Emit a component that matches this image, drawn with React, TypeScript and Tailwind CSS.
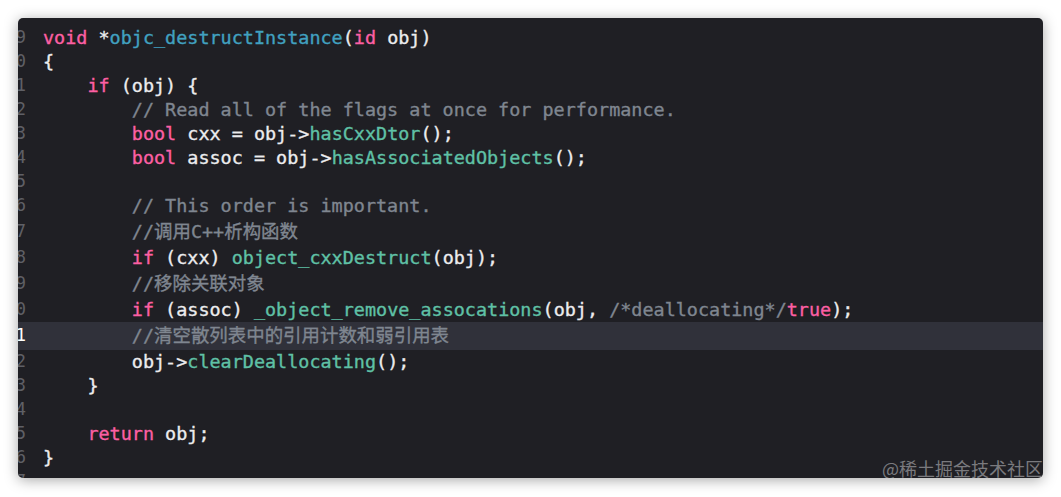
import React from 'react';

type Kind = 'k' | 'p' | 'c' | 'f' | 'm';
type Token = [Kind, string];

interface CodeLine {
  no: number;
  tokens: Token[];
  tall?: boolean;
  active?: boolean;
}

const kindClass: Record<Kind, string> = {
  k: 'text-[#fc5fa3]',
  p: 'text-[#ececee]',
  c: 'text-[#7f8690]',
  f: 'text-[#41a1c0]',
  m: 'text-[#5fc1a6]',
};

const I1 = '    ';
const I2 = '        ';

const lines: CodeLine[] = [
  { no: 9, tokens: [['k', 'void'], ['p', ' *'], ['f', 'objc_destructInstance'], ['p', '('], ['k', 'id'], ['p', ' obj)']] },
  { no: 10, tokens: [['p', '{']] },
  { no: 11, tokens: [['p', I1], ['k', 'if'], ['p', ' (obj) {']] },
  { no: 12, tokens: [['p', I2], ['c', '// Read all of the flags at once for performance.']] },
  { no: 13, tokens: [['p', I2], ['k', 'bool'], ['p', ' cxx = obj->'], ['m', 'hasCxxDtor'], ['p', '();']] },
  { no: 14, tokens: [['p', I2], ['k', 'bool'], ['p', ' assoc = obj->'], ['m', 'hasAssociatedObjects'], ['p', '();']] },
  { no: 15, tokens: [] },
  { no: 16, tokens: [['p', I2], ['c', '// This order is important.']] },
  { no: 17, tall: true, tokens: [['p', I2], ['c', '//调用C++析构函数']] },
  { no: 18, tokens: [['p', I2], ['k', 'if'], ['p', ' (cxx) '], ['m', 'object_cxxDestruct'], ['p', '(obj);']] },
  { no: 19, tall: true, tokens: [['p', I2], ['c', '//移除关联对象']] },
  {
    no: 20,
    tokens: [
      ['p', I2],
      ['k', 'if'],
      ['p', ' (assoc) '],
      ['m', '_object_remove_assocations'],
      ['p', '(obj, '],
      ['c', '/*deallocating*/'],
      ['k', 'true'],
      ['p', ');'],
    ],
  },
  { no: 21, tall: true, active: true, tokens: [['p', I2], ['c', '//清空散列表中的引用计数和弱引用表']] },
  { no: 22, tokens: [['p', I2 + 'obj->'], ['m', 'clearDeallocating'], ['p', '();']] },
  { no: 23, tokens: [['p', I1 + '}']] },
  { no: 24, tokens: [] },
  { no: 25, tokens: [['p', I1], ['k', 'return'], ['p', ' obj;']] },
  { no: 26, tokens: [['p', '}']] },
  { no: 27, tokens: [] },
];

const App = () => {
  return (
    <div className="min-h-[497px] w-[1061px] bg-white p-[18px]">
      <div
        className="relative h-[460px] w-[1025px] overflow-hidden rounded-[5px] bg-[#1f1f24] pt-[8px] shadow-[0_2px_14px_rgba(0,0,0,0.35)]"
        style={{ fontFamily: '"DejaVu Sans Mono", "Noto Sans CJK SC", monospace' }}
      >
        {lines.map((line) => (
          <div
            key={line.no}
            className={`flex items-center whitespace-pre text-[18.45px] ${line.tall ? 'h-[28px]' : 'h-[24px]'} ${
              line.active ? 'bg-[#30313a]' : ''
            }`}
          >
            {/* gutter: only the last digit peeks out */}
            <div className="flex w-[8px] shrink-0 justify-end overflow-hidden">
              <span className={`shrink-0 text-[17px] ${line.active ? 'text-white' : 'text-[#5f6066]'}`}>{line.no}</span>
            </div>
            <div className="ml-[17px] [-webkit-text-stroke:0.35px_currentColor]">
              {line.tokens.map(([kind, text], i) => (
                <span key={i} className={kindClass[kind]}>
                  {text}
                </span>
              ))}
            </div>
          </div>
        ))}

        <span
          className="absolute bottom-[1px] right-0 text-[18px] leading-none text-[#7a7a7e]"
          style={{ fontFamily: '"Noto Sans CJK SC", sans-serif' }}
        >
          @稀土掘金技术社区
        </span>
      </div>
    </div>
  );
};

export default App;
